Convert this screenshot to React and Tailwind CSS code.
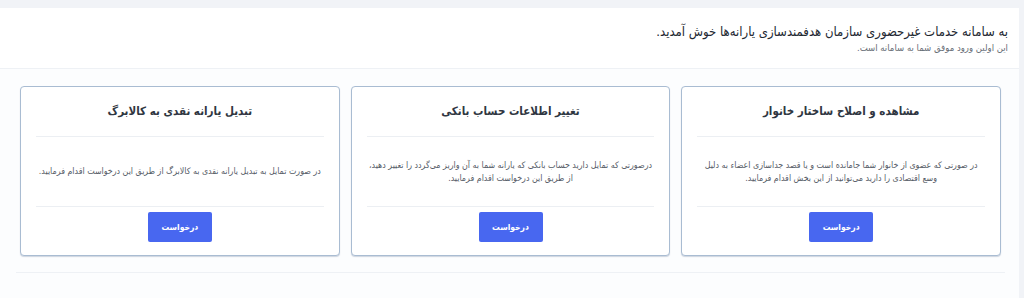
import React from "react";

const services = [
  {
    title: "مشاهده و اصلاح ساختار خانوار",
    lines: [
      "در صورتی که عضوی از خانوار شما جامانده است و یا قصد جداسازی اعضاء به دلیل",
      "وسع اقتصادی را دارید می‌توانید از این بخش اقدام فرمایید.",
    ],
  },
  {
    title: "تغییر اطلاعات حساب بانکی",
    lines: [
      "درصورتی که تمایل دارید حساب بانکی که یارانه شما به آن واریز می‌گردد را تغییر دهید،",
      "از طریق این درخواست اقدام فرمایید.",
    ],
  },
  {
    title: "تبدیل یارانه نقدی به کالابرگ",
    lines: ["در صورت تمایل به تبدیل یارانه نقدی به کالابرگ از طریق این درخواست اقدام فرمایید."],
  },
];

function ServiceCard({ title, lines }) {
  return (
    <div className="flex h-[170px] flex-col rounded-[4px] border border-[#a9bcd2] bg-white px-[15px] shadow-[0_1px_1px_rgba(120,140,170,0.35)]">
      <div className="flex h-[50px] items-center justify-center border-b border-[#eceff3]">
        <h2 className="text-[11.5px] font-bold text-[#2f3641]">{title}</h2>
      </div>
      <div className="flex h-[70px] flex-col items-center justify-center border-b border-[#eceff3]">
        {lines.map((line) => (
          <p key={line} className="whitespace-nowrap text-center text-[8.8px] leading-[13px] text-[#555b66]">
            {line}
          </p>
        ))}
      </div>
      <div className="flex flex-1 items-start justify-center pt-[5px]">
        <button className="h-[30px] w-[64px] rounded-[2px] bg-[#4867f0] text-[8.5px] font-bold text-white">
          درخواست
        </button>
      </div>
    </div>
  );
}

export default function App() {
  return (
    <div
      dir="rtl"
      className="h-[298px] overflow-hidden bg-[#f1f3f7] pt-[8px] pr-[5px]"
      style={{ fontFamily: '"DejaVu Sans Condensed", "DejaVu Sans", sans-serif' }}
    >
      <div className="h-full rounded-tl-[6px] rounded-tr-[6px] bg-[#fcfdfe]">
        <div className="border-b border-[#eef1f5] bg-white px-[11px] pt-[15px] pb-[14px]">
          <h1 className="text-[13px] leading-[18px] text-[#222831]">
            به سامانه خدمات غیرحضوری سازمان هدفمندسازی یارانه‌ها خوش آمدید.
          </h1>
          <p className="mt-[1px] text-[9.5px] leading-[12px] text-[#666c75]">
            این اولین ورود موفق شما به سامانه است.
          </p>
        </div>
        <div className="pr-[18px] pl-[20px] pt-[17px]">
          <div className="grid grid-cols-3 gap-[11px]">
            {services.map((s) => (
              <ServiceCard key={s.title} {...s} />
            ))}
          </div>
          <div className="mt-[16px] border-t border-[#eef1f5] mx-[-4px]" />
        </div>
      </div>
    </div>
  );
}
